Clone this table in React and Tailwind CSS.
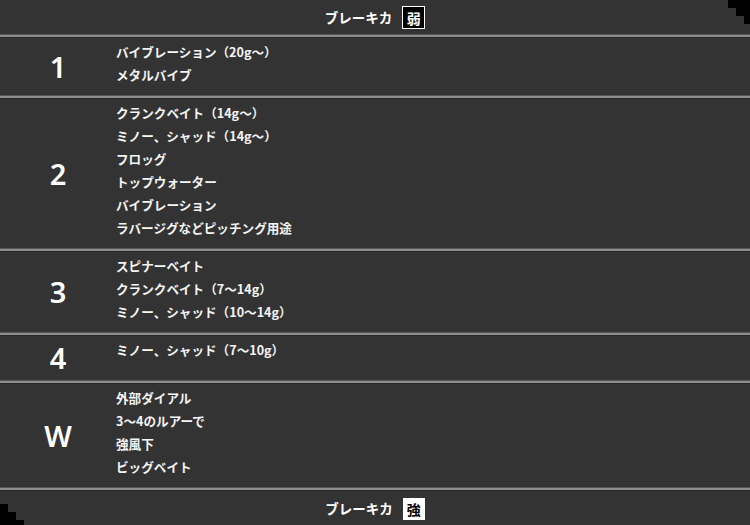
import React from "react";

const rows = [
  { n: "1", items: ["バイブレーション（20g～）", "メタルバイブ"] },
  {
    n: "2",
    items: [
      "クランクベイト（14g～）",
      "ミノー、シャッド（14g～）",
      "フロッグ",
      "トップウォーター",
      "バイブレーション",
      "ラバージグなどピッチング用途",
    ],
  },
  { n: "3", items: ["スピナーベイト", "クランクベイト（7～14g）", "ミノー、シャッド（10～14g）"] },
  { n: "4", items: ["ミノー、シャッド（7～10g）"], minH: true },
  { n: "W", items: ["外部ダイアル", "3～4のルアーで", "強風下", "ビッグベイト"] },
];

function Divider() {
  return (
    <div className="flex flex-col">
      <div className="h-px bg-[#565656]" />
      <div className="h-[2px] bg-[#8d8d8d]" />
      <div className="h-px bg-[#262626]" />
    </div>
  );
}

function Header({ label, strong }) {
  return (
    <div className="flex h-[34px] items-center justify-center gap-[10px] pt-px">
      <span className="text-[13.5px] font-bold text-white">ブレーキカ</span>
      <span
        className={
          strong
            ? "flex h-[22px] w-[22px] items-center justify-center bg-white text-[14px] font-bold leading-none text-black"
            : "flex h-[23px] w-[23px] items-center justify-center border border-white bg-black text-[14px] font-bold leading-none text-white"
        }
      >
        {label}
      </span>
    </div>
  );
}

export default function App() {
  return (
    <div
      className="relative h-[525px] w-[750px] overflow-hidden bg-[#333333] text-white"
      style={{ fontFamily: '"Noto Sans CJK JP", "Noto Sans", sans-serif' }}
    >
      <Header label="弱" />
      <Divider />
      {rows.map((r) => (
        <React.Fragment key={r.n}>
          <div className={"flex " + (r.minH ? "min-h-[44px]" : "")}>
            <div
              className="flex w-[116px] shrink-0 items-center justify-center text-[29px] font-semibold"
              style={{ fontFamily: '"Noto Sans", sans-serif' }}
            >
              {r.n}
            </div>
            <div className="flex flex-col pt-[2px] pb-[9px]">
              {r.items.map((t) => (
                <div key={t} className="text-[12.6px] font-bold leading-[23px] text-[#f4f4f4]">
                  {t}
                </div>
              ))}
            </div>
          </div>
          <Divider />
        </React.Fragment>
      ))}
      <Header label="強" strong />

      <svg className="absolute right-0 top-0" width="22" height="24" viewBox="0 0 22 24">
        <polygon points="0,0 22,0 22,24 16,24 16,16 8,16 8,8 0,8" fill="#000" />
      </svg>
      <svg className="absolute bottom-0 left-0" width="24" height="21" viewBox="0 0 24 21">
        <polygon points="0,0 8,0 8,8 16,8 16,16 24,16 24,21 0,21" fill="#000" />
      </svg>
    </div>
  );
}
